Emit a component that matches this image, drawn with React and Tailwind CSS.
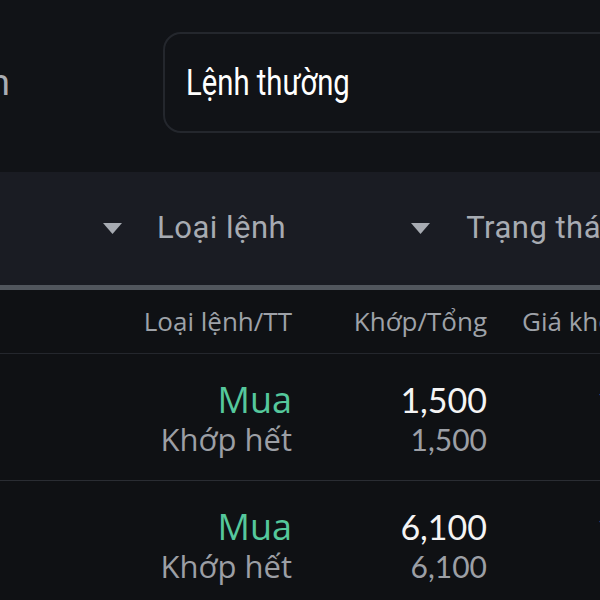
import React from "react";

function Tri() {
  return (
    <svg width="19" height="11" viewBox="0 0 19 11" className="shrink-0">
      <path d="M0 0 H19 L9.5 11 Z" fill="#a7abb2" />
    </svg>
  );
}

function Row({ side, status, filled, total, price }) {
  return (
    <div className="h-[127px] border-b border-[#2a2d33] flex items-start pt-[26px] whitespace-nowrap">
      <div className="w-[292px] shrink-0 flex flex-col items-end font-['Open_Sans']">
        <span className="text-[36px] leading-[40px] text-[#55c89c]">{side}</span>
        <span className="text-[31px] leading-[38px] text-[#9c9fa5]">{status}</span>
      </div>
      <div className="w-[195px] shrink-0 flex flex-col items-end font-['Lato']">
        <span className="text-[34px] leading-[40px] text-[#f4f4f4]">{filled}</span>
        <span className="text-[30px] leading-[38px] text-[#9c9fa5]">{total}</span>
      </div>
      <div className="pl-[110px] font-['Lato'] text-[34px] leading-[40px] text-[#f4f4f4]">{price}</div>
    </div>
  );
}

export default function App() {
  return (
    <div className="w-[600px] h-[600px] overflow-hidden bg-[#111317] font-['Roboto'] flex flex-col">
      <div className="h-[172px] shrink-0 flex pt-[32px]">
        <div className="w-[10px] shrink-0 overflow-hidden flex justify-end h-[101px] items-center">
          <span className="text-[37px] text-[#a9adb3] whitespace-nowrap">Sổ lệnh</span>
        </div>
        <div className="ml-[153px] h-[101px] w-[480px] shrink-0 rounded-[18px] border-2 border-[#24272d] flex items-center pl-[21px]">
          <span className="text-[37px] text-white whitespace-nowrap inline-block origin-left scale-x-[0.79]">Lệnh thường</span>
        </div>
      </div>
      <div className="h-[113px] shrink-0 bg-[#1a1c23] flex items-center pl-[103px] whitespace-nowrap">
        <Tri />
        <span className="ml-[35px] w-[130px] text-[31px] tracking-[0.5px] text-[#a7abb2]">Loại lệnh</span>
        <span className="ml-[125px]"><Tri /></span>
        <span className="ml-[36px] text-[31px] tracking-[0.5px] text-[#a7abb2]">Trạng thái</span>
      </div>
      <div className="h-[5px] shrink-0 bg-[#51565d]" />
      <div className="h-[64px] shrink-0 bg-[#0f1114] border-b border-[#24272d] flex items-center font-['Open_Sans'] text-[26px] text-[#9ea2a8] whitespace-nowrap">
        <span className="w-[292px] shrink-0 text-right">Loại lệnh/TT</span>
        <span className="w-[195px] shrink-0 text-right">Khớp/Tổng</span>
        <span className="pl-[35px]">Giá khớp</span>
      </div>
      <div className="bg-[#0f1114] flex-1">
        <Row side="Mua" status="Khớp hết" filled="1,500" total="1,500" price="19.50" />
        <Row side="Mua" status="Khớp hết" filled="6,100" total="6,100" price="19.45" />
      </div>
    </div>
  );
}
